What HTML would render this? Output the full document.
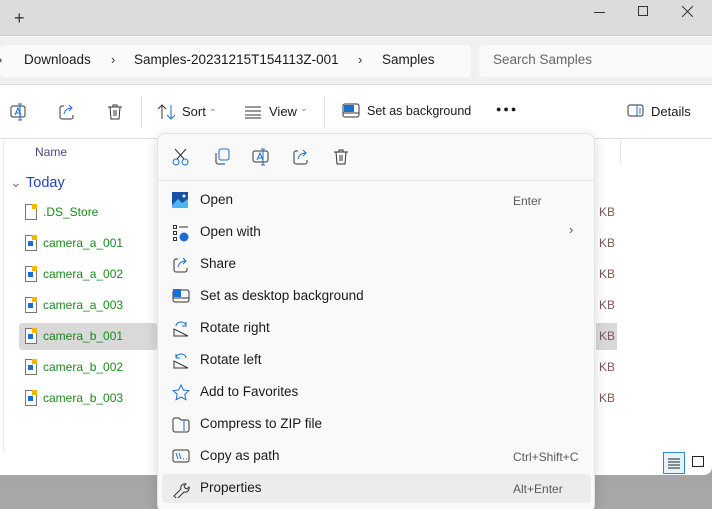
<!DOCTYPE html>
<html><head><meta charset="utf-8"><style>
*{margin:0;padding:0;box-sizing:border-box}
html{width:712px;height:509px;overflow:hidden}
body{width:712px;height:509px;overflow:hidden;position:relative;font-family:"Segoe UI","Liberation Sans",sans-serif;font-size:13px;color:#1a1a1a;background:linear-gradient(#8a8a8a,#a8a8a8)}
.a{position:absolute}
.win{left:0;top:0;width:712px;height:475px;background:#fff;border-bottom-right-radius:8px;overflow:hidden}
.title{left:0;top:0;width:712px;height:36px;background:#dcdcdc;border-bottom:1px solid #c8c8c8}
.addr{left:0;top:37px;width:712px;height:48px;background:#f0f0f0;border-bottom:1px solid #dadada}
.crumb{left:0;top:45px;width:471px;height:32px;background:#fafafa;border-radius:4px}
.search{left:479px;top:45px;width:240px;height:32px;background:#fafafa;border-radius:4px;color:#666;padding:7px 14px}
.t{white-space:nowrap}
.fn{color:#1a8a1a;font-size:12px}
.menu{left:157px;top:133px;width:438px;height:380px;background:#f9f9f9;border:1px solid #e3e3e3;border-radius:8px;box-shadow:0 4px 14px rgba(0,0,0,.15)}
.mi{left:42px;font-size:13.5px;color:#1a1a1a}
.sc{font-size:12px;color:#5a5a5a}
.kb{left:599px;color:#7a5a5a;font-size:12px}
</style></head><body>
<div class="a win">
 <div class="a title"></div>
 <div class="a t" style="left:14px;top:8px;font-size:18px;color:#333">+</div>
 <div class="a" style="left:594px;top:12px;width:11px;height:1px;background:#333"></div>
 <div class="a" style="left:638px;top:6px;width:10px;height:10px;border:1px solid #333"></div>
 <svg class="a" style="left:682px;top:6px" width="11" height="11" stroke="#333"><path d="M0 0l11 11M11 0L0 11"/></svg>
 <div class="a addr"></div>
 <div class="a crumb"></div>
 <div class="a t" style="left:-2px;top:52px;color:#333">›</div>
 <div class="a t" style="left:24px;top:52px;font-size:13.5px">Downloads</div>
 <div class="a t" style="left:111px;top:52px;color:#333">›</div>
 <div class="a t" style="left:134px;top:52px;font-size:13.5px">Samples-20231215T154113Z-001</div>
 <div class="a t" style="left:358px;top:52px;color:#333">›</div>
 <div class="a t" style="left:382px;top:52px;font-size:13.5px">Samples</div>
 <div class="a search t" style="font-size:13.5px">Search Samples</div>
 <svg class="a" style="left:9px;top:103px" width="18" height="18" viewBox="0 0 18 18" fill="none" stroke="#333" stroke-width="1"><rect x="2" y="3" width="14" height="11" rx="2"/><path d="M6 12l3-7 3 7M7 10h4" stroke="#1a6fd1"/><path d="M11 1v16M9 1h4M9 17h4" stroke="#1a6fd1"/></svg>
 <svg class="a" style="left:58px;top:103px" width="18" height="18" viewBox="0 0 18 18" fill="none" stroke="#333"><path d="M6 3H4a2 2 0 0 0-2 2v9a2 2 0 0 0 2 2h9a2 2 0 0 0 2-2v-2"/><path d="M6 11c1-4 4-6 8-6M11 2l3 3-3 3" stroke="#1a6fd1"/></svg>
 <svg class="a" style="left:106px;top:103px" width="18" height="18" viewBox="0 0 18 18" fill="none" stroke="#333"><path d="M2 4h14M7 4V2h4v2M4 4l1 12h8l1-12M8 7v6M10 7v6"/></svg>
 <div class="a" style="left:141px;top:96px;width:1px;height:32px;background:#e0e0e0"></div>
 <svg class="a" style="left:157px;top:103px" width="20" height="18" viewBox="0 0 20 18" fill="none" stroke="#333"><path d="M5 16V2M1 6l4-4 4 4"/><path d="M14 2v14M10 12l4 4 4-4" stroke="#1a6fd1"/></svg>
 <div class="a t" style="left:182px;top:104px">Sort</div><div class="a t" style="left:209px;top:103px;font-size:9px;color:#777">⌄</div>
 <svg class="a" style="left:244px;top:105px" width="18" height="14" stroke="#333"><path d="M1 2h16M1 6h16M1 10h16M1 13h16"/></svg>
 <div class="a t" style="left:269px;top:104px">View</div><div class="a t" style="left:300px;top:103px;font-size:9px;color:#777">⌄</div>
 <div class="a" style="left:324px;top:96px;width:1px;height:32px;background:#e0e0e0"></div>
 <svg class="a" style="left:342px;top:103px" width="18" height="16" viewBox="0 0 18 16" fill="none" stroke="#333"><rect x="1" y="1" width="16" height="13" rx="2"/><path d="M1 10h16" /><rect x="2" y="2" width="10" height="7" fill="#1a6fd1" stroke="none"/></svg>
 <div class="a t" style="left:367px;top:104px;font-size:12.5px">Set as background</div>
 <div class="a t" style="left:496px;top:104px;font-size:9px;letter-spacing:2px">●●●</div>
 <svg class="a" style="left:627px;top:104px" width="18" height="14" fill="none" stroke="#333"><rect x="1" y="1" width="15" height="11" rx="2"/><path d="M10 1v11" stroke="#1a6fd1"/><path d="M12 5h2M12 7h2M12 9h2" stroke="#1a6fd1"/></svg>
 <div class="a t" style="left:651px;top:104px">Details</div>
 <div class="a" style="left:0;top:138px;width:712px;height:1px;background:#e0e0e0"></div>
 <div class="a" style="left:3px;top:140px;width:1px;height:312px;background:#e8e8e8"></div>
 <div class="a" style="left:620px;top:140px;width:1px;height:24px;background:#e5e5e5"></div>
 <div class="a t" style="left:35px;top:145px;font-size:12px;color:#4a4a8a">Name</div>
 <div class="a t" style="left:10px;top:174px;font-size:14px;color:#777">⌄</div>
 <div class="a t" style="left:26px;top:175px;font-size:14.5px;color:#2045b8">Today</div>
 <div class="a" style="left:19px;top:323px;width:138px;height:27px;background:#d9d9d9;border-radius:3px"></div>
 <div class="a" style="left:596px;top:323px;width:21px;height:27px;background:#d9d9d9"></div>
 <div class="a" style="left:663px;top:452px;width:22px;height:22px;border:1px solid #2a8ad4;background:#e5f1fb"></div>
 <svg class="a" style="left:668px;top:457px" width="12" height="12" stroke="#222"><path d="M0 2h12M0 5h12M0 8h12M0 11h12"/></svg>
 <div class="a" style="left:692px;top:456px;width:12px;height:11px;border:1px solid #222"></div>
</div>
<div class="a t fn" style="left:43px;top:205px">.DS_Store</div>
<div class="a t fn" style="left:43px;top:236px">camera_a_001</div>
<div class="a t fn" style="left:43px;top:267px">camera_a_002</div>
<div class="a t fn" style="left:43px;top:298px">camera_a_003</div>
<div class="a t fn" style="left:43px;top:329px">camera_b_001</div>
<div class="a t fn" style="left:43px;top:360px">camera_b_002</div>
<div class="a t fn" style="left:43px;top:391px">camera_b_003</div>
<svg class="a" style="left:25px;top:204px" width="12" height="248">
 <g fill="#fff" stroke="#777"><rect x="0.5" y="0.5" width="11" height="15"/><rect x="0.5" y="31.5" width="11" height="15"/><rect x="0.5" y="62.5" width="11" height="15"/><rect x="0.5" y="93.5" width="11" height="15"/><rect x="0.5" y="124.5" width="11" height="15"/><rect x="0.5" y="155.5" width="11" height="15"/><rect x="0.5" y="186.5" width="11" height="15"/></g>
 <g fill="#f2b800"><rect x="7" y="0" width="5" height="5"/><rect x="7" y="31" width="5" height="5"/><rect x="7" y="62" width="5" height="5"/><rect x="7" y="93" width="5" height="5"/><rect x="7" y="124" width="5" height="5"/><rect x="7" y="155" width="5" height="5"/><rect x="7" y="186" width="5" height="5"/></g>
 <g fill="#1a6fd1"><rect x="3" y="37" width="5" height="5"/><rect x="3" y="68" width="5" height="5"/><rect x="3" y="99" width="5" height="5"/><rect x="3" y="130" width="5" height="5"/><rect x="3" y="161" width="5" height="5"/><rect x="3" y="192" width="5" height="5"/></g>
</svg>
<div class="a t kb" style="top:205px">KB</div><div class="a t kb" style="top:236px">KB</div><div class="a t kb" style="top:267px">KB</div><div class="a t kb" style="top:298px">KB</div><div class="a t kb" style="top:329px">KB</div><div class="a t kb" style="top:360px">KB</div><div class="a t kb" style="top:391px">KB</div>
<div class="a menu">
 <div class="a" style="left:0;top:46px;width:436px;height:1px;background:#e5e5e5"></div>
 <svg class="a" style="left:14px;top:14px" width="18" height="18" fill="none" stroke="#1a6fd1"><circle cx="4" cy="14" r="3"/><circle cx="13" cy="14" r="3"/><path d="M5 11L14 1M12 11L3 1" stroke="#333"/></svg>
 <svg class="a" style="left:55px;top:14px" width="18" height="18" fill="none" stroke="#1a6fd1"><rect x="6" y="1" width="10" height="11" rx="2"/><path d="M3 5v9a2 2 0 0 0 2 2h7" stroke="#333"/></svg>
 <svg class="a" style="left:94px;top:14px" width="18" height="18" viewBox="0 0 18 18" fill="none" stroke="#333"><rect x="1" y="3" width="15" height="11" rx="2"/><path d="M5 12l3-7 3 7M6 10h4" stroke="#1a6fd1"/><path d="M11 1v16M9 1h4M9 17h4" stroke="#1a6fd1"/></svg>
 <svg class="a" style="left:134px;top:14px" width="18" height="18" fill="none" stroke="#333"><path d="M6 3H4a2 2 0 0 0-2 2v9a2 2 0 0 0 2 2h9a2 2 0 0 0 2-2v-2"/><path d="M6 11c1-4 4-6 8-6M11 2l3 3-3 3" stroke="#1a6fd1"/></svg>
 <svg class="a" style="left:174px;top:14px" width="18" height="18" fill="none" stroke="#333"><path d="M2 4h14M7 4V2h4v2M4 4l1 12h8l1-12M8 7v6M10 7v6"/></svg>
 <div class="a" style="left:4px;top:340px;width:429px;height:29px;background:#ececec;border-radius:4px"></div>
 <svg class="a" style="left:14px;top:58px" width="16" height="16"><rect width="16" height="16" fill="#1a4fa8"/><path d="M0 13l6-6 4 4 6-4v9H0z" fill="#4fb3f0"/><circle cx="12" cy="4" r="1.5" fill="#fff"/></svg>
 <svg class="a" style="left:14px;top:90px" width="18" height="18" fill="none" stroke="#333"><rect x="1.5" y="1.5" width="3" height="3"/><rect x="1.5" y="7.5" width="3" height="3"/><rect x="1.5" y="13.5" width="3" height="3"/><path d="M7 3h9"/><circle cx="12" cy="13" r="4.5" fill="#1a6fd1" stroke="none"/></svg>
 <svg class="a" style="left:14px;top:122px" width="18" height="18" fill="none" stroke="#333"><path d="M6 3H4a2 2 0 0 0-2 2v9a2 2 0 0 0 2 2h9a2 2 0 0 0 2-2v-2"/><path d="M6 11c1-4 4-6 8-6M11 2l3 3-3 3" stroke="#1a6fd1"/></svg>
 <svg class="a" style="left:14px;top:154px" width="18" height="16" fill="none" stroke="#333"><rect x="1" y="2" width="16" height="12" rx="2"/><path d="M1 10h16"/><rect x="1" y="1" width="8" height="8" fill="#1a6fd1" stroke="none"/></svg>
 <svg class="a" style="left:14px;top:186px" width="18" height="18" fill="none" stroke="#333"><path d="M2 16h14L2 9z"/><path d="M4 6a5 4 0 0 1 10 0M14 2v4h-4" stroke="#1a6fd1"/></svg>
 <svg class="a" style="left:14px;top:218px" width="18" height="18" fill="none" stroke="#333"><path d="M2 16h14L2 9z"/><path d="M14 6a5 4 0 0 0-10 0M4 2v4h4" stroke="#1a6fd1"/></svg>
 <svg class="a" style="left:14px;top:250px" width="18" height="18" fill="none" stroke="#1a6fd1"><path d="M9 1l2.4 5 5.4.6-4 3.7 1.1 5.4L9 13l-4.9 2.7 1.1-5.4-4-3.7 5.4-.6z"/></svg>
 <svg class="a" style="left:14px;top:282px" width="18" height="18" fill="none" stroke="#333"><path d="M1 4a2 2 0 0 1 2-2h4l2 2h6a2 2 0 0 1 2 2v8a2 2 0 0 1-2 2H3a2 2 0 0 1-2-2z"/><path d="M12 4v11" stroke="#1a6fd1"/></svg>
 <svg class="a" style="left:14px;top:314px" width="18" height="16" fill="none" stroke="#333"><rect x="1" y="2" width="16" height="12" rx="2"/><path d="M4 5l2 6M7 5l2 6M11 11h1M14 11h1" stroke="#1a6fd1"/></svg>
 <svg class="a" style="left:14px;top:346px" width="18" height="18" fill="none" stroke="#333"><path d="M2 16l7-7a4 4 0 0 1 5-5l-2 2 1 2 2 1 2-2a4 4 0 0 1-5 5l-7 7z"/></svg>
 <div class="a t mi" style="top:58px">Open</div><div class="a t sc" style="left:355px;top:60px">Enter</div>
 <div class="a t mi" style="top:90px">Open with</div><div class="a t" style="left:411px;top:88px;color:#555">›</div>
 <div class="a t mi" style="top:122px">Share</div>
 <div class="a t mi" style="top:154px">Set as desktop background</div>
 <div class="a t mi" style="top:186px">Rotate right</div>
 <div class="a t mi" style="top:218px">Rotate left</div>
 <div class="a t mi" style="top:250px">Add to Favorites</div>
 <div class="a t mi" style="top:282px">Compress to ZIP file</div>
 <div class="a t mi" style="top:314px">Copy as path</div><div class="a t sc" style="left:355px;top:316px">Ctrl+Shift+C</div>
 <div class="a t mi" style="top:346px">Properties</div><div class="a t sc" style="left:355px;top:348px">Alt+Enter</div>
</div>
</body></html>
